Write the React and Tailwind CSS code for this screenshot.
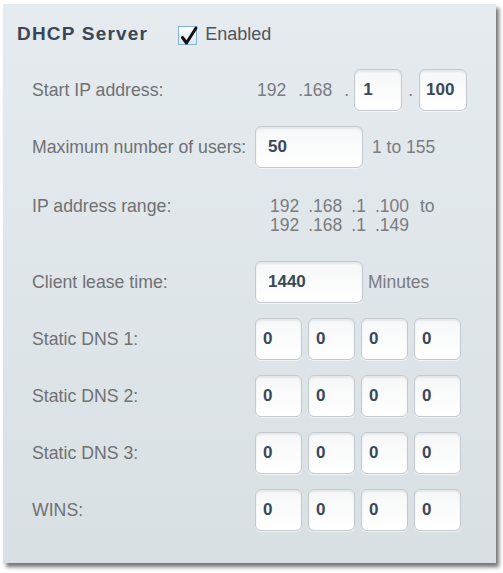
import React from 'react'

const font = { fontFamily: '"Liberation Sans", Arial, sans-serif' }

function Box({ value, w = 'w-[48px]', pad = 'pl-[8px]' }) {
  return (
    <div
      className={`${w} ${pad} flex h-[42px] shrink-0 items-center rounded-[6px] border border-[#c3c9ce] bg-gradient-to-b from-[#f6f7f8] to-white text-[17px] font-bold text-[#3a4859] shadow-[inset_0_2px_2px_rgba(0,0,0,0.07),0_1px_0_rgba(255,255,255,0.6)]`}
    >
      {value}
    </div>
  )
}

function Row({ label, children, className = 'items-center' }) {
  return (
    <div className={`flex ${className}`}>
      <div className="w-[223px] shrink-0 text-[17.7px] text-[#6f7173]">{label}</div>
      {children}
    </div>
  )
}

function Quad() {
  return (
    <div className="flex gap-[6px]">
      {['0', '0', '0', '0'].map((v, i) => (
        <Box key={i} value={v} w="w-[47px]" pad="pl-[7px]" />
      ))}
    </div>
  )
}

export default function App() {
  return (
    <div className="h-[573px] w-[503px] bg-white pl-[3px] pt-[4px]" style={font}>
      <div className="flex h-[559px] w-[493px] flex-col bg-gradient-to-b from-[#e5ebef] to-[#d9e0e4] pt-[18px] shadow-[3px_4px_4px_rgba(0,0,0,0.55)]">
        <div className="flex h-[24px] items-center pl-[14px]">
          <span className="text-[19px] font-bold tracking-[1.2px] text-[#3a4656]">DHCP Server</span>
          <span className="relative ml-[30px] mr-[8px] mt-[3px] h-[19px] w-[19px] border border-[#86b0d4] bg-gradient-to-b from-white to-[#dbe9f6]">
            <svg viewBox="0 0 20 22" className="absolute left-[0px] top-[-3px] h-[22px] w-[20px]">
              <path d="M3.5 13.5 L7.5 19 L17 4" fill="none" stroke="#111" strokeWidth="3" strokeLinecap="round" strokeLinejoin="round" />
            </svg>
          </span>
          <span className="text-[18px] text-[#4f555c]">Enabled</span>
        </div>

        <div className="mt-[23px] flex flex-col gap-[15px] pl-[29px]">
          <Row label="Start IP address:">
            <div className="flex items-center text-[17.5px] text-[#7a7c7f]">
              <span className="ml-[2px]">192</span>
              <span className="ml-[12px]">.168</span>
              <span className="ml-[12px] mr-[5px]">.</span>
              <Box value="1" />
              <span className="mx-[6px]">.</span>
              <Box value="100" pad="pl-[6px]" />
            </div>
          </Row>

          <Row label="Maximum number of users:">
            <Box value="50" w="w-[108px]" pad="pl-[12px]" />
            <span className="ml-[9px] text-[17.5px] text-[#7a7c7f]">1 to 155</span>
          </Row>

          <Row label="IP address range:" className="h-[63px] items-start pt-[14px] leading-[19px]">
            <div className="ml-[15px] flex flex-col text-[17.5px] leading-[19px] text-[#7a7c7f]">
              <div className="flex gap-[9px]">
                <span>192</span>
                <span>.168</span>
                <span>.1</span>
                <span>.100</span>
                <span className="ml-[2px]">to</span>
              </div>
              <div className="flex gap-[9px]">
                <span>192</span>
                <span>.168</span>
                <span>.1</span>
                <span>.149</span>
              </div>
            </div>
          </Row>

          <Row label="Client lease time:">
            <Box value="1440" w="w-[108px]" pad="pl-[12px]" />
            <span className="ml-[5px] text-[17.5px] text-[#7a7c7f]">Minutes</span>
          </Row>

          <Row label="Static DNS 1:">
            <Quad />
          </Row>
          <Row label="Static DNS 2:">
            <Quad />
          </Row>
          <Row label="Static DNS 3:">
            <Quad />
          </Row>
          <Row label="WINS:">
            <Quad />
          </Row>
        </div>
      </div>
    </div>
  )
}
